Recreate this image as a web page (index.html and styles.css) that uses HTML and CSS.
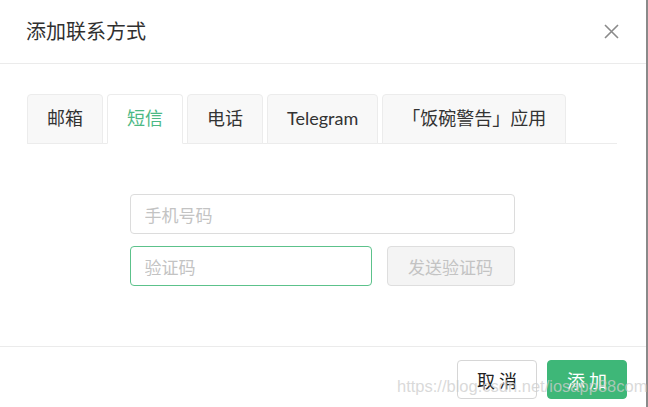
FILE: index.html
```html
<!DOCTYPE html>
<html lang="zh-CN">
<head>
<meta charset="utf-8">
<title>添加联系方式</title>
<link rel="stylesheet" href="styles.css">
</head>
<body>
<div class="dialog">
  <div class="header">
    <span class="title">添加联系方式</span>
    <span class="close" aria-label="关闭">
      <svg width="15" height="15" viewBox="0 0 15 15"><path d="M1 1 L14 14 M14 1 L1 14" stroke="#8a8a8a" stroke-width="1.6" fill="none"/></svg>
    </span>
  </div>
  <div class="body">
    <div class="tabs">
      <div class="tab">邮箱</div>
      <div class="tab active">短信</div>
      <div class="tab">电话</div>
      <div class="tab">Telegram</div>
      <div class="tab">「饭碗警告」应用</div>
    </div>
    <div class="form">
      <input class="field" type="text" placeholder="手机号码">
      <div class="code-row">
        <input class="field field-focus" type="text" placeholder="验证码">
        <button class="send" disabled>发送验证码</button>
      </div>
    </div>
  </div>
  <div class="footer">
    <button class="btn">取 消</button>
    <button class="btn btn-primary">添 加</button>
  </div>
  <div class="watermark">https://blog.csdn.net/iosapp88com</div>
</div>
</body>
</html>
```

FILE: styles.css
```css
* { box-sizing: border-box; }
html, body {
  margin: 0;
  padding: 0;
  background: #fff;
}
body {
  width: 648px;
  height: 407px;
  overflow: hidden;
  font-family: "Noto Sans CJK SC", "Noto Sans", sans-serif;
  color: #333;
}
.dialog {
  position: relative;
  width: 648px;
  height: 407px;
  border-right: 2px solid #8a8a8a;
  display: flex;
  flex-direction: column;
  background: #fff;
}
.header {
  height: 64px;
  flex: none;
  border-bottom: 1px solid #ebebeb;
  display: flex;
  align-items: center;
  justify-content: space-between;
  padding: 0 27px 2px 26px;
}
.title {
  font-size: 20px;
  line-height: 24px;
  color: #303030;
}
.close {
  display: flex;
  width: 15px;
  height: 15px;
  margin-top: 1px;
}
.body {
  flex: 1;
  padding: 30px 29px 0 27px;
}
.tabs {
  display: flex;
  gap: 4px;
  border-bottom: 1px solid #ececec;
  height: 50px;
}
.tab {
  height: 50px;
  padding: 0 19px 2px;
  font-family: "Lato", "Noto Sans CJK SC", sans-serif;
  font-size: 18px;
  line-height: 24px;
  display: flex;
  align-items: center;
  background: #f8f8f8;
  border: 1px solid #ececec;
  border-radius: 4px 4px 0 0;
  color: #333;
  white-space: nowrap;
}
.tab.active {
  background: #fff;
  border-bottom-color: #fff;
  color: #4cb884;
}
.form {
  width: 385px;
  margin: 50px auto 0;
  display: flex;
  flex-direction: column;
  gap: 12px;
}
.field {
  display: block;
  width: 100%;
  height: 40px;
  border: 1px solid #dcdcdc;
  border-radius: 4px;
  padding: 0 14px;
  font-family: "Noto Sans CJK SC", "Noto Sans", sans-serif;
  font-size: 17px;
  color: #333;
  outline: none;
  background: #fff;
}
.field::placeholder { color: #c3c3c3; }
.field-focus { border-color: #5cc28b; }
.code-row {
  display: flex;
  gap: 15px;
}
.code-row .field { width: 242px; }
.send {
  width: 128px;
  height: 40px;
  border: 1px solid #dedede;
  border-radius: 4px;
  background: #f4f4f4;
  color: #c3c3c3;
  font-family: "Noto Sans CJK SC", "Noto Sans", sans-serif;
  font-size: 17px;
  padding: 0;
}
.footer {
  flex: none;
  height: 61px;
  border-top: 1px solid #ebebeb;
  display: flex;
  justify-content: flex-end;
  align-items: flex-start;
  gap: 10px;
  padding: 13px 19px 0 0;
}
.btn {
  width: 80px;
  height: 39px;
  border: 1px solid #d6d6d6;
  border-radius: 4px;
  background: #fff;
  color: #222;
  font-family: "Noto Sans CJK SC", "Noto Sans", sans-serif;
  font-size: 18px;
  padding: 0;
}
.btn-primary {
  background: #3eb778;
  border-color: #3eb778;
  color: #fff;
}
.watermark {
  position: absolute;
  left: 397px;
  top: 376px;
  font-family: "Liberation Sans", Arial, sans-serif;
  font-size: 16.5px;
  line-height: 20px;
  color: rgba(205, 205, 205, 0.75);
  white-space: nowrap;
  pointer-events: none;
}
```
